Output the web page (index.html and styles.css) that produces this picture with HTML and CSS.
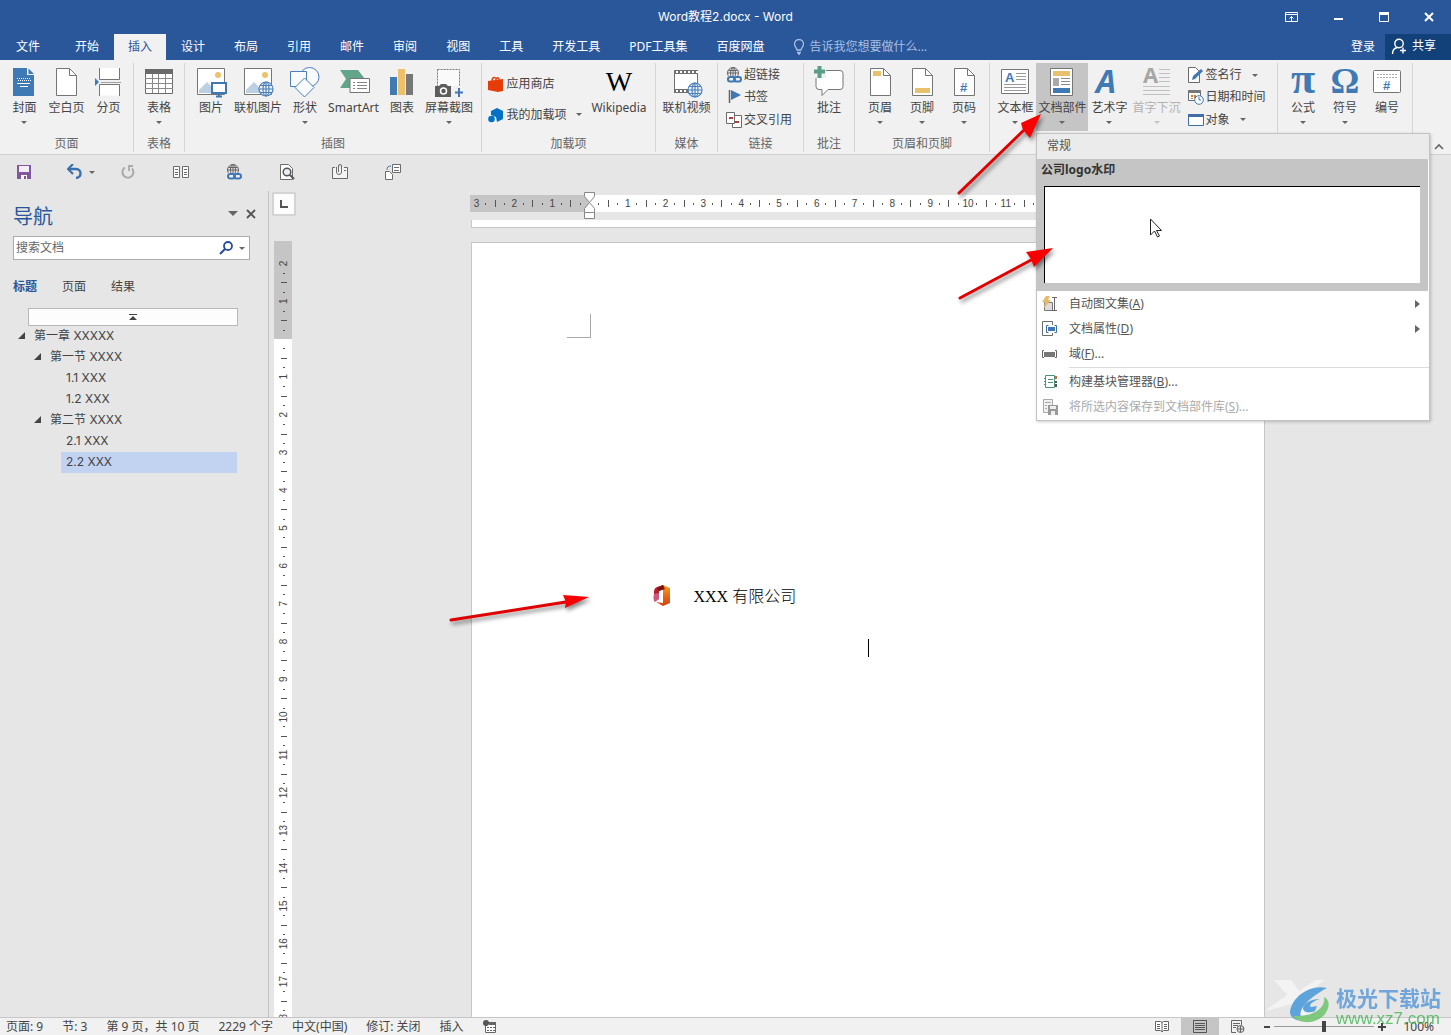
FILE: index.html
```html
<!DOCTYPE html>
<html lang="zh-CN">
<head>
<meta charset="utf-8">
<title>Word教程2.docx - Word</title>
<link rel="stylesheet" href="styles.css">
</head>
<body>
<svg class="defs" aria-hidden="true">
  <symbol id="globe" viewBox="0 0 16 16"><circle cx="8" cy="8" r="7" fill="#f1f1f1"/><g fill="none" stroke="currentColor" stroke-width="1.2"><circle cx="8" cy="8" r="7"/><ellipse cx="8" cy="8" rx="3" ry="7"/><path d="M1 8h14M2 4.500h12M2 11.500h12M8 1v14"/></g></symbol>
  <symbol id="page" viewBox="0 0 32 32"><path d="M6.500 2.500h13l7 7v20h-20z" fill="#fff" stroke="#757575"/><path d="M19.500 2.500v7h7" fill="none" stroke="#757575"/></symbol>
  <symbol id="photo" viewBox="0 0 32 32"><path d="M2.500 2.500h27v26h-27z" fill="#fff" stroke="#757575"/><circle cx="23" cy="9" r="3" fill="#ecc26c"/><path d="M4 27v-3l8-8 9 9v2z" fill="#bcd0e4"/></symbol>
  <symbol id="weblink" viewBox="0 0 16 16"><g fill="none" stroke="#666"><circle cx="7" cy="6" r="5.500"/><ellipse cx="7" cy="6" rx="2.500" ry="5.500"/><path d="M1.500 6h11M7 .5v9M2.500 3.500h9"/></g><rect x="0" y="9" width="16" height="7" fill="#eee"/><g fill="none" stroke="#3f78b5" stroke-width="2"><rect x="2" y="10" width="7" height="4.500" rx="2.200"/><rect x="8" y="10" width="7" height="4.500" rx="2.200"/></g></symbol>
</svg>

<div class="app">
  <header class="top">
    <div class="titlebar">
      <h1 class="title">Word教程2.docx - Word</h1>
      <div class="window-buttons">
        <button type="button" aria-label="功能区显示选项"><svg width="14" height="12" viewBox="0 0 14 12"><path d="M.5 1.500h12v9H.5zM.5 3.500h12M6.500 10V5.500M4.500 7.500l2-2 2 2" fill="none" stroke="#fff"/></svg></button>
        <button type="button" aria-label="最小化"><svg width="14" height="12"><path d="M3 7h9v2H3z" fill="#fff"/></svg></button>
        <button type="button" aria-label="最大化"><svg width="14" height="12"><path d="M2.500 1.500h9v9h-9zM2 3h10" fill="none" stroke="#fff"/><path d="M2 1h10v3H2z" fill="#fff"/></svg></button>
        <button type="button" aria-label="关闭"><svg width="14" height="12"><path d="M3 2l8 8M11 2l-8 8" stroke="#fff" stroke-width="2"/></svg></button>
      </div>
    </div>
    <nav class="tabs">
      <a href="#" class="tab file">文件</a>
      <a href="#" class="tab">开始</a>
      <a href="#" class="tab active">插入</a>
      <a href="#" class="tab">设计</a>
      <a href="#" class="tab">布局</a>
      <a href="#" class="tab">引用</a>
      <a href="#" class="tab">邮件</a>
      <a href="#" class="tab">审阅</a>
      <a href="#" class="tab">视图</a>
      <a href="#" class="tab">工具</a>
      <a href="#" class="tab">开发工具</a>
      <a href="#" class="tab">PDF工具集</a>
      <a href="#" class="tab">百度网盘</a>
      <label class="tell"><svg width="12" height="16" viewBox="0 0 12 16"><path d="M4 11c0-2-2.500-3-2.500-6a4.500 4.500 0 0 1 9 0c0 3-2.500 4-2.500 6zM4 13.500h4M5 15h2" fill="none" stroke="#a9bfe0" stroke-width="1.300"/></svg><input type="text" placeholder="告诉我您想要做什么..."></label>
      <button type="button" class="login">登录</button>
      <button type="button" class="share"><svg width="16" height="16" viewBox="0 0 16 16"><circle cx="8" cy="5.500" r="4.200" fill="none" stroke="#fff" stroke-width="1.400"/><path d="M1.500 16c0-3.500 2-6 5-6.500M12 9.500v6M9 12.500h6" fill="none" stroke="#fff" stroke-width="1.400"/></svg>共享</button>
    </nav>
  </header>

  <section class="ribbon" aria-label="插入">
    <div class="group g-pages"><div class="items">
      <button type="button" class="big"><svg class="ico" viewBox="0 0 32 32"><path d="M5 2h14v7h7v21H5z" fill="#3f7ab5"/><path d="M20.500 2.500v5.500h5.500z" fill="#3f7ab5"/><path d="M9 12.500h13M10 14.500h13" stroke="#fff" stroke-dasharray="1 1"/><path d="M9 17.500h13M12 20.500h8" stroke="#fff"/></svg><span>封面</span><i class="caret"></i></button>
      <button type="button" class="big"><svg class="ico"><use href="#page"/></svg><span>空白页</span></button>
      <button type="button" class="big"><svg class="ico" viewBox="0 0 32 32"><path d="M6.500 2v11.500h20V2M6.500 29.500v-11h20v11M6.500 30v-1M26.500 30v-1" fill="#fff" stroke="#757575"/><path d="M8 16.500h20" stroke="#a0a0a0"/><path d="M2 12l4 4-4 4z" fill="#3f7ab5"/></svg><span>分页</span></button>
    </div><h2>页面</h2></div>

    <div class="group g-table"><div class="items">
      <button type="button" class="big"><svg class="ico" viewBox="0 0 32 32"><path d="M2.500 3.500h27v24h-27z" fill="#fff" stroke="#6a6a6a"/><path d="M2 3h28v5H2z" fill="#6a6a6a"/><path d="M2 12.500h28M2 17.500h28M2 22.500h28M9.500 8v19M15.500 8v19M22.500 8v19" stroke="#8a8a8a"/></svg><span>表格</span><i class="caret"></i></button>
    </div><h2>表格</h2></div>

    <div class="group g-illus"><div class="items">
      <button type="button" class="big"><svg class="ico" viewBox="0 0 32 32"><use href="#photo"/><path d="M16 16h16v12H16z" fill="#f1f1f1"/><path d="M17 17h14v10H17z" fill="#fff" stroke="#3f78b5" stroke-width="2"/><path d="M21 30.500h6M24 28v2" stroke="#3f78b5" stroke-width="2"/></svg><span>图片</span></button>
      <button type="button" class="big"><svg class="ico blue" viewBox="0 0 32 32"><use href="#photo"/><use href="#globe" x="16" y="15" width="16" height="16"/></svg><span>联机图片</span></button>
      <button type="button" class="big"><svg class="ico" viewBox="0 0 32 32" stroke="#4a7fbb" fill="#f8fafc"><circle cx="20.500" cy="11" r="9.500"/><path d="M1.500 5.500h16v15h-16z"/><path d="M15.500 12l9.500 9.500-9.500 9.500L6 21.500z"/></svg><span>形状</span><i class="caret"></i></button>
      <button type="button" class="big"><svg class="ico" viewBox="0 0 32 32"><path d="M2 4h18l7 9-7 9H2l6-9z" fill="#62a58b"/><path d="M12 12.500h19.500v14H12z" fill="#fff" stroke="#757575"/><path d="M15 16.500h2M15 19.500h2M15 22.500h2M19 16.500h10M19 19.500h10M19 22.500h10" stroke="#858585"/></svg><span>SmartArt</span></button>
      <button type="button" class="big"><svg class="ico" viewBox="0 0 32 32"><path d="M4 11h7v18H4z" fill="#3f7ab5"/><path d="M12 3h7v26h-7z" fill="#efc06c"/><path d="M20 8h7v21h-7z" fill="#777"/></svg><span>图表</span></button>
      <button type="button" class="big"><svg class="ico" viewBox="0 0 32 32"><path d="M4.500 3.500h22v24h-22z" fill="#fafafa" stroke="#777" stroke-dasharray="2 1"/><path d="M2 20h4l2-2h5l2 2h3v11H2z" fill="#5d5d5d"/><circle cx="10.500" cy="25" r="3" fill="#5d5d5d" stroke="#fff" stroke-width="1.500"/><path d="M18 20h10v11H18z" fill="#f1f1f1"/><path d="M26 22v9M22 26.500h8" stroke="#3f78b5" stroke-width="2"/></svg><span>屏幕截图</span><i class="caret"></i></button>
    </div><h2>插图</h2></div>

    <div class="group g-addins"><div class="items">
      <div class="stack roomy">
        <button type="button" class="small"><svg class="mini" viewBox="0 0 16 16"><path d="M0 5l15-2v12l-5 1-10-2z" fill="#e63c0a"/><path d="M4 5c0-4 4-5 4-1M8 4c0-3 3-3 3 0" fill="none" stroke="#e63c0a" stroke-width="1.300"/></svg>应用商店</button>
        <button type="button" class="small"><svg class="mini" viewBox="0 0 16 16"><path d="M3 4l6-3 6 3v8l-6 3-1-5-5-2z" fill="#0072c6"/><circle cx="3.500" cy="12" r="3.300" fill="#0072c6"/></svg>我的加载项<i class="caret"></i></button>
      </div>
      <button type="button" class="big"><span class="ico wiki">W</span><span>Wikipedia</span></button>
    </div><h2>加载项</h2></div>

    <div class="group g-media"><div class="items">
      <button type="button" class="big"><svg class="ico blue" viewBox="0 0 32 32"><path d="M4 4h24v23H4z" fill="#707070"/><path d="M5 8h22v15H5z" fill="#fff"/><path d="M6 6h22M6 25h12" stroke="#fff" stroke-width="2" stroke-dasharray="2 2"/><use href="#globe" x="17" y="16" width="16" height="16"/></svg><span>联机视频</span></button>
    </div><h2>媒体</h2></div>

    <div class="group g-links"><div class="items">
      <div class="stack">
        <button type="button" class="small"><svg class="mini"><use href="#weblink"/></svg>超链接</button>
        <button type="button" class="small"><svg class="mini" viewBox="0 0 16 16"><path d="M3.500 1v13" stroke="#606060" stroke-width="1.500"/><path d="M5 1l10 5-10 5z" fill="#3f78b5"/></svg>书签</button>
        <button type="button" class="small"><svg class="mini" viewBox="0 0 16 16" fill="#fff" stroke="#6b6b6b"><path d="M8.500 3.500h7v12h-9v-4"/><path d="M.5.500h8v11h-8z"/><path d="M3 6h4M9 10h4" stroke="#b2403a" stroke-width="2"/></svg>交叉引用</button>
      </div>
    </div><h2>链接</h2></div>

    <div class="group g-comment"><div class="items">
      <button type="button" class="big"><svg class="ico" viewBox="0 0 32 32"><path d="M6 4.500h21q3 0 3 3v13q0 3-3 3H15l-6 6v-6H6q-3 0-3-3v-13q0-3 3-3z" fill="#fff" stroke="#777"/><path d="M1 1h12v11H1z" fill="#f1f1f1"/><path d="M6.500 0v12M1 5.500h11" stroke="#5a9f85" stroke-width="4"/></svg><span>批注</span></button>
    </div><h2>批注</h2></div>

    <div class="group g-header wide"><div class="items">
      <button type="button" class="big"><svg class="ico" viewBox="0 0 32 32"><use href="#page"/><path d="M9 5h8v5H9z" fill="#e8c06e"/></svg><span>页眉</span><i class="caret"></i></button>
      <button type="button" class="big"><svg class="ico" viewBox="0 0 32 32"><use href="#page"/><path d="M9 22h15v5H9z" fill="#e8c06e"/></svg><span>页脚</span><i class="caret"></i></button>
      <button type="button" class="big"><svg class="ico" viewBox="0 0 32 32"><use href="#page"/><text x="12" y="26" class="hash">#</text></svg><span>页码</span><i class="caret"></i></button>
    </div><h2>页眉和页脚</h2></div>

    <div class="group g-text"><div class="items">
      <button type="button" class="big"><svg class="ico" viewBox="0 0 32 32"><path d="M2.500 3.500h27v24h-27z" fill="#fff" stroke="#757575"/><text x="6" y="16" class="hash">A</text><path d="M17 7.500h10M17 10.500h10M17 13.500h10M5 18.500h22M5 21.500h22M5 24.500h22" stroke="#9a9a9a"/></svg><span>文本框</span><i class="caret"></i></button>
      <button type="button" class="big pressed" aria-expanded="true"><svg class="ico" viewBox="0 0 32 32"><path d="M4.500 2.500h22v27h-22z" fill="#fff" stroke="#757575"/><path d="M7 5h17v5H7z" fill="#e8c06e"/><path d="M7 12h6v8H7z" fill="#aaa"/><path d="M15 12.500h9M15 15.500h9M15 18.500h9" stroke="#8a8a8a"/><path d="M7 22h17v5H7z" fill="#3f7ab5"/></svg><span>文档部件</span><i class="caret"></i></button>
      <button type="button" class="big"><svg class="ico" viewBox="0 0 32 32"><text x="3" y="27" class="art">A</text></svg><span>艺术字</span><i class="caret"></i></button>
      <button type="button" class="big off" disabled><svg class="ico" viewBox="0 0 32 32"><text x="2" y="17" class="drop">A</text><path d="M18 3.500h11M18 7.500h11M18 11.500h11M18 15.500h11M2 20.500h27M2 24.500h27M2 28.500h27" stroke="#c0c0c0"/></svg><span>首字下沉</span><i class="caret"></i></button>
      <div class="stack">
        <button type="button" class="small"><svg class="mini" viewBox="0 0 16 16"><path d="M.5.500h7l4 4v11H.5z" fill="#fff" stroke="#6b6b6b"/><path d="M4 13l1-4 8-7 2 2-8 8z" fill="#3f78b5"/></svg>签名行<i class="caret"></i></button>
        <button type="button" class="small"><svg class="mini" viewBox="0 0 16 16"><path d="M.5 1.500h12v10H.5z" fill="#fff" stroke="#6b6b6b"/><path d="M0 1h13v3H0z" fill="#777"/><path d="M3 6h2v2H3zM6 6h2v3H6zM3 9h2v1H3z" fill="#d07b3d"/><circle cx="11" cy="11" r="4.300" fill="#fff" stroke="#3f78b5"/><path d="M11 8v3h2" fill="none" stroke="#3f78b5"/></svg>日期和时间</button>
        <button type="button" class="small"><svg class="mini" viewBox="0 0 16 16"><path d="M.5 2.500h15v11H.5z" fill="#fff" stroke="#3f6fa5"/><path d="M0 2h16v3H0z" fill="#3f6fa5"/></svg>对象<i class="caret"></i></button>
      </div>
    </div></div>

    <div class="group g-symbol wide"><div class="items">
      <button type="button" class="big"><svg class="ico" viewBox="0 0 32 32"><text x="16" y="27" class="sym pi">π</text></svg><span>公式</span><i class="caret"></i></button>
      <button type="button" class="big"><svg class="ico" viewBox="0 0 32 32"><text x="16" y="27" class="sym">Ω</text></svg><span>符号</span><i class="caret"></i></button>
      <button type="button" class="big"><svg class="ico" viewBox="0 0 32 32"><rect x="2.500" y="4.500" width="27" height="22" rx="1" fill="#fff" stroke="#757575"/><path d="M6 8.500h20M6 11.500h20" stroke="#aaa" stroke-dasharray="2 1"/><text x="12" y="24" class="hash">#</text></svg><span>编号</span></button>
    </div></div>
    <button type="button" class="collapse" aria-label="折叠功能区"><svg width="10" height="7"><path d="M1 6l4-4 4 4" fill="none" stroke="#666" stroke-width="1.600"/></svg></button>
  </section>

  <div class="quick">
    <button type="button" aria-label="保存"><svg class="mini" viewBox="0 0 16 16"><path d="M1 1h14v14H1z" fill="#8256a0"/><path d="M3 2h10v6H3z" fill="#f3eef6"/><path d="M5 11h6v4H5z" fill="#fff"/><path d="M8 12h2v3H8z" fill="#8256a0"/></svg></button>
    <button type="button" aria-label="撤消"><svg class="mini" viewBox="0 0 16 16"><path d="M2 5h7c6 0 6 8 0 9" fill="none" stroke="#3a6fb0" stroke-width="2.400"/><path d="M6 0L1 5l5 5" fill="none" stroke="#3a6fb0" stroke-width="2.200"/></svg><i class="caret"></i></button>
    <button type="button" aria-label="重复"><svg class="mini" viewBox="0 0 16 16"><path d="M5 3.500a5.500 5.500 0 1 0 7 1" fill="none" stroke="#aaa" stroke-width="2"/><path d="M13 2H9v5" fill="none" stroke="#aaa" stroke-width="1.800"/></svg></button>
    <button type="button" aria-label="双页"><svg width="18" height="14" fill="#fff" stroke="#6b6b6b"><path d="M1.500 1.500h6v11h-6zM10.500 1.500h6v11h-6z"/><path d="M3 4.500h3M3 7.500h3M3 9.500h3M12 4.500h3M12 7.500h3M12 9.500h3"/></svg></button>
    <button type="button" aria-label="超链接"><svg class="mini"><use href="#weblink"/></svg></button>
    <button type="button" aria-label="打印预览"><svg class="mini" viewBox="0 0 16 16"><path d="M1.500.500h8l4 4v11h-12z" fill="#fff" stroke="#6b6b6b"/><circle cx="8" cy="8" r="3.800" fill="#e8eef2" stroke="#555" stroke-width="1.500"/><path d="M11 11l4 4" stroke="#555" stroke-width="2"/></svg></button>
    <button type="button" aria-label="附件"><svg class="mini" viewBox="0 0 16 16" fill="none" stroke="#6b6b6b"><path d="M3 3.500H.5v11h15v-11H12" fill="#f4f4f4"/><path d="M4.500 3v5a2.500 2.500 0 0 0 5 0V2a1.500 1.500 0 0 0-3 0v6"/><path d="M12 6.500h2"/></svg></button>
    <button type="button" aria-label="发送"><svg class="mini" viewBox="0 0 16 16" fill="#fff" stroke="#6b6b6b"><path d="M.5 7.500h4l3 3v5h-7zM7.500.500h8v8h-8z"/><path d="M9 3.500h5M9 6.500h5"/><path d="M2 6c0-3 1-4 4-4" stroke="#3f78b5" fill="none"/></svg></button>
  </div>

  <main class="work">
    <aside class="navpane">
      <div class="nav-head"><h2>导航</h2><button type="button" aria-label="任务窗格选项"><svg width="10" height="6"><path d="M0 0h10L5 5z" fill="#666"/></svg></button><button type="button" aria-label="关闭窗格"><svg width="10" height="10"><path d="M1 1l8 8M9 1l-8 8" stroke="#555" stroke-width="1.800"/></svg></button></div>
      <label class="search"><input type="text" placeholder="搜索文档" aria-label="搜索文档"><svg width="14" height="14" viewBox="0 0 14 14"><circle cx="9" cy="5" r="4" fill="none" stroke="#2c4d9b" stroke-width="1.800"/><path d="M6 8l-5 5" stroke="#2c4d9b" stroke-width="2.200"/></svg><i class="caret"></i></label>
      <div class="nav-tabs"><a href="#" class="on">标题</a><a href="#">页面</a><a href="#">结果</a></div>
      <button type="button" class="jump" aria-label="跳到开头"><svg width="8" height="6"><path d="M0 .5h8" stroke="#444"/><path d="M0 6h8L4 2z" fill="#444"/></svg></button>
      <ul class="tree">
        <li class="l1"><i></i>第一章 XXXXX</li>
        <li class="l2"><i></i>第一节 XXXX</li>
        <li class="l3">1.1 XXX</li>
        <li class="l3">1.2 XXX</li>
        <li class="l2"><i></i>第二节 XXXX</li>
        <li class="l3">2.1 XXX</li>
        <li class="l3 sel">2.2 XXX</li>
      </ul>
    </aside>
    <div class="side">
      <button type="button" class="corner" aria-label="制表符"><svg width="8" height="8"><path d="M1 0v7h7" fill="none" stroke="#555" stroke-width="2"/></svg></button>
      <svg class="vruler" id="vruler"></svg>
    </div>
    <div class="canvas">
      <svg class="hruler" id="hruler"></svg>
      <div class="prev-page"></div>
      <article class="paper">
        <div class="crop"></div>
        <div class="mark"><svg width="20" height="24" viewBox="0 0 20 24"><defs><linearGradient id="og" x1="0" y1="0" x2="0" y2="1"><stop offset="0" stop-color="#f5a01c"/><stop offset="1" stop-color="#d93a12"/></linearGradient></defs><path d="M11 0l7 3v15l-7 3-7-4 7 1V4z" fill="url(#og)"/><path d="M11 0l1 4-5 2v8l-4 2c-2-2-1-5-1-8 0-4 1-5 3-6z" fill="#b3202a"/><path d="M7 8v6l-4 3c-2-1-1-5-1-8z" fill="#cc5a80"/><path d="M11 0l2 4-6 2-2-3z" fill="#7d1210"/></svg><p>XXX 有限公司</p></div>
        <div class="insertion"></div>
      </article>
    </div>
  </main>

  <footer class="status">
    <span>页面: 9</span><span>节: 3</span><span>第 9 页，共 10 页</span><span>2229 个字</span><span>中文(中国)</span><span>修订: 关闭</span><span>插入</span>
    <svg width="14" height="13" viewBox="0 0 14 13"><path d="M2.500 3.500h10v9h-10z" fill="#fff" stroke="#666"/><path d="M6 2h7v3H6z" fill="#666"/><circle cx="3" cy="3" r="3" fill="#555"/><path d="M4 7.500h8M4 10.500h8" stroke="#666" stroke-dasharray="2 1"/></svg>
    <div class="views">
      <button type="button" aria-label="阅读视图"><svg width="14" height="13" fill="#fff" stroke="#666"><path d="M.5 1.500h5l1.500 1 1.500-1h5v9h-5L7 12l-1.500-1.500h-5zM7 2v10M2 4.500h3M2 6.500h3M2 8.500h3M9 4.500h3M9 6.500h3M9 8.500h3"/></svg></button>
      <button type="button" class="current" aria-label="页面视图"><svg width="14" height="13" stroke="#555"><path d="M.5.500h13v12H.5zM2 3.500h10M2 5.500h10M2 7.500h10M2 9.500h10" fill="none"/></svg></button>
      <button type="button" aria-label="Web 版式视图"><svg width="14" height="13" viewBox="0 0 14 13" stroke="#666"><path d="M5 12.500H.5V.5h10V5M2 3.500h7M2 5.500h5M2 7.500h3" fill="none"/><circle cx="9.500" cy="9" r="3.500" fill="#ddd"/><path d="M6 9h7M9.500 6v6"/></svg></button>
    </div>
    <button type="button" class="step minus" aria-label="缩小"><svg width="7" height="8"><path d="M0 4h6" stroke="#444" stroke-width="2"/></svg></button>
    <input type="range" class="zoom" min="10" max="190" value="100" aria-label="显示比例">
    <button type="button" class="step plus" aria-label="放大"><svg width="8" height="8"><path d="M0 4h8M4 0v8" stroke="#444" stroke-width="2"/></svg></button>
    <span class="percent">100%</span>
  </footer>
</div>

<section class="gallery">
  <h3>常规</h3>
  <button type="button" class="block"><strong>公司logo水印</strong><span class="preview"></span></button>
  <button type="button" class="row"><svg class="mini" viewBox="0 0 16 16"><path d="M2.500 6.500h8v8h-8z" fill="#ddd" stroke="#777"/><path d="M4 0h4L6 4h3l-7 8 1-6H0z" fill="#e8b96a"/><path d="M10 1.500h2.500v13H10M15 1.500h-2.500v13H15" fill="none" stroke="#666"/></svg><span>自动图文集(<u>A</u>)</span><i class="more"></i></button>
  <button type="button" class="row"><svg class="mini" viewBox="0 0 16 16"><path d="M10.500 4V.500H.5v14h10V12" fill="none" stroke="#6b6b6b"/><path d="M6.500 4.500h-2v7h2M12.500 4.500h2v7h-2" fill="none" stroke="#3f6fa5"/><path d="M6 6h7v4H6z" fill="#3f78b5"/></svg><span>文档属性(<u>D</u>)</span><i class="more"></i></button>
  <button type="button" class="row"><svg class="mini" viewBox="0 0 16 16"><path d="M2 4.500H.5v7H2M13 4.500h1.500v7H13" fill="none" stroke="#666"/><path d="M2 6h11v5H2z" fill="#777"/></svg><span>域(<u>F</u>)...</span></button>
  <hr>
  <button type="button" class="row"><svg class="mini" viewBox="0 0 16 16"><path d="M3.500 1.500h9v12h-9z" fill="#fff" stroke="#4c8f7a"/><path d="M6 5.500h5M6 8.500h5M2 4.500h2M2 7.500h2M2 10.500h2" stroke="#4c8f7a"/><path d="M13 2h2v3h-2z" fill="#c9683a"/><path d="M13 7h2v2h-2zM13 10h2v3h-2z" fill="#555"/></svg><span>构建基块管理器(<u>B</u>)...</span></button>
  <button type="button" class="row" disabled><svg class="mini" viewBox="0 0 16 16"><path d="M1.500.500h9v13h-9z" fill="#f1f1f1" stroke="#aaa"/><path d="M3 3.500h6M3 6.500h2M3 9.500h2" stroke="#aaa"/><path d="M6 6h10v10H6z" fill="#999"/><path d="M8 7h6v3H8zM9 12h4v4H9z" fill="#eee"/></svg><span>将所选内容保存到文档部件库(<u>S</u>)...</span></button>
  <svg class="pointer" width="14" height="21" viewBox="0 0 14 21"><path d="M1.500 1v16l4-4 3 6 2-1-3-5.500h5z" fill="#fff" stroke="#222"/></svg>
</section>

<svg class="arrows" width="1100" height="640" aria-hidden="true">
  <g stroke="#e00000" stroke-width="3" stroke-linecap="round" fill="#f80000">
    <path d="M959 193l64-62"/><path d="M960 298l73-39"/><path d="M451 620l115-18"/>
  </g>
  <g fill="#f80000"><path d="M1041 114l-20 9 2 7 7 8z"/><path d="M1053 248l-27 4 5 7 3 8z"/><path d="M589 597l-26-2 3 7-1 6z"/></g>
</svg>

<div class="brand">
  <svg width="70" height="50" viewBox="0 0 70 50"><path d="M8 1h17l8 11L50 1h8L37 20l12 16H34l-9-11L4 31H0l21-15z" fill="#fff" opacity=".6"/><path d="M61 9C44 5 25 18 24 34c1 5 7 9 14 7-8-5-3-18 23-32z" fill="#4597da"/><path d="M27 37c7 9 24 8 32-2 6-8 4-15-1-17 2 10-9 20-31 19z" fill="#6cc36a"/><path d="M54 20c-9 0-16 4-17 9 0 4 5 6 12 3l2-5-6 1c-3-2 2-6 9-8z" fill="#4597da"/></svg>
  <div><b>极光下载站</b><em>www.xz7.com</em></div>
</div>
<script src="rulers.js"></script>
</body>
</html>
```
FILE: styles.css
```css
* { box-sizing: border-box; }
body { margin: 0; background: #e6e6e6; color: #444; font: 12px/18px "Noto Sans", "Noto Sans CJK SC", sans-serif; }
button, input { font: inherit; color: inherit; background: none; border: 0; padding: 0; margin: 0; }
button { display: flex; align-items: center; white-space: nowrap; }
h1, h2, h3, p, ul { margin: 0; padding: 0; font-weight: 400; font-size: 12px; list-style: none; }
a { color: inherit; text-decoration: none; }
svg { display: block; flex: none; }
.defs { position: absolute; width: 0; height: 0; }
.app { height: 100vh; display: flex; flex-direction: column; overflow: hidden; }
.caret { border: 3px solid transparent; border-top-color: #666; border-bottom: 0; }
.mini { width: 16px; height: 16px; }
.blue { color: #4a80bd; }

/* title bar and tabs */
.top { background: #2a579a; color: #fff; }
.titlebar { height: 34px; display: grid; grid-template-columns: 1fr auto 1fr; align-items: center; }
.title { grid-column: 2; font-family: Inter, "Noto Sans CJK SC", sans-serif; }
.window-buttons { display: flex; justify-content: flex-end; }
.window-buttons button { width: 46px; justify-content: center; }
.window-buttons button:last-child { width: 44px; }
.tabs { display: flex; height: 26px; gap: 1px; padding-left: 2px; white-space: nowrap; }
.tab { padding: 4px 14px 3px; }
.file { margin-right: 6px; }
.active { background: #f1f1f1; color: #2a579a; }
.tell { display: flex; align-items: center; gap: 4px; padding-left: 14px; flex: 1; color: #a9bfe0; }
.tell input { width: 160px; }
.tell input::placeholder { color: #a9bfe0; opacity: 1; }
.login { padding: 0 9px 1px; }
.share { background: #124078; padding: 0 15px 2px 6px; gap: 5px; }

/* ribbon */
.ribbon { display: flex; height: 95px; flex: none; background: #f1f1f1; border-bottom: 1px solid #d2d2d2; padding: 3px 0 2px; position: relative; }
.group { flex: none; display: flex; flex-direction: column; align-items: center; border-right: 1px solid #d5d5d5; --gap: 7px; }
.group h2 { color: #666; margin-top: 4px; }
.items { display: flex; gap: var(--gap); height: 68px; }
.g-pages { width: 134px; --gap: 8px; }
.g-table, .g-comment { width: 51px; }
.g-illus { width: 297px; }
.g-illus .items { padding-left: 6px; }
.g-addins { width: 174px; }
.g-media { width: 62px; }
.g-links { width: 86px; }
.g-links .items { padding-right: 3px; }
.g-header { width: 135px; }
.g-text { width: 288px; --gap: 1px; }
.g-text .items { padding-right: 6px; }
.g-symbol { width: 135px; }
.wide { --gap: 14px; }
.big { flex-direction: column; padding: 3px 2px 0; height: 68px; }
.big .ico { width: 32px; height: 32px; margin: 0 -4px 1px; overflow: visible; }
.big .caret { margin-top: 4px; }
.pressed { background: #c5c5c5; }
.off { color: #b1b1b1; }
.off .caret { border-top-color: #c5c5c5; }
.wiki { font: 28px/32px "Liberation Serif", serif; color: #000; text-align: center; }
.stack { display: flex; flex-direction: column; padding-top: 1px; }
.small { height: 23px; gap: 2px; }
.small .caret { margin-left: 8px; }
.roomy { padding-top: 5px; }
.roomy .small { height: 31px; }
.g-text .stack { padding-left: 4px; }
.hash { font: bold 13px "Liberation Sans", sans-serif; fill: #3f78b5; }
.art { font: italic bold 32px "Open Sans", sans-serif; fill: #3f7ab5; }
.drop { font: bold 22px "Open Sans", sans-serif; fill: #a6a6a6; }
.sym { font: bold 36px "Liberation Serif", serif; fill: #3f7ab5; text-anchor: middle; }
.pi { font-size: 44px; }
.collapse { position: absolute; right: 7px; bottom: 4px; }

/* quick access */
.quick { height: 36px; flex: none; display: flex; }
.quick button { width: 53px; height: 34px; justify-content: center; position: relative; }
.quick button:first-child { width: 48px; }
.quick .caret { position: absolute; left: 41px; top: 16px; }

/* navigation pane */
.work { flex: 1; min-height: 0; display: flex; }
.navpane { width: 269px; flex: none; border-right: 1px solid #c2c2c2; padding: 11px 18px 0 13px; }
.nav-head { display: flex; gap: 8px; height: 30px; margin-right: -6px; }
.nav-head h2 { flex: 1; font-size: 20px; line-height: 30px; color: #2a579a; }
.nav-head button { height: 24px; }
.search { display: flex; align-items: center; gap: 6px; height: 24px; margin: 4px 0 18px; padding: 0 4px 0 2px; background: #fff; border: 1px solid #ababab; }
.search input { flex: 1; min-width: 0; }
.search input::placeholder { color: #666; opacity: 1; }
.nav-tabs { display: flex; gap: 25px; margin-bottom: 12px; }
.nav-tabs .on { color: #2a579a; font-weight: 700; }
.jump { width: 210px; height: 18px; margin-left: 15px; justify-content: center; background: #fdfdfd; border: 1px solid #b8b8b8; }
.tree { font-family: Inter, "Noto Sans CJK SC", sans-serif; }
.tree li { height: 21px; line-height: 20px; position: relative; }
.tree .l1 { margin-left: 5px; padding-left: 16px; }
.tree .l2 { margin-left: 21px; padding-left: 16px; }
.tree .l3 { margin: 0 13px 0 48px; padding-left: 5px; }
.tree i { position: absolute; left: 0; top: 6px; border-left: 7px solid transparent; border-bottom: 7px solid #444; }
.tree .sel { background: #c2d3f2; }

/* rulers and pages */
.side { width: 26px; flex: none; display: flex; flex-direction: column; padding-top: 1px; }
.corner { width: 24px; height: 24px; margin-left: 3px; flex: none; justify-content: center; background: #fdfdfd; border: 2px solid #d4d4d4; }
.vruler { width: 18px; flex: 1; min-height: 0; margin: 25px 0 0 5px; }
.canvas { flex: 1; min-width: 0; display: flex; flex-direction: column; align-items: center; padding: 1px 11px 0 0; }
.hruler { width: 796px; height: 28px; }
.prev-page { width: 794px; height: 8px; background: #fff; border: 1px solid #c6c6c6; border-top: 0; }
.paper { width: 794px; flex: 1; margin-top: 14px; background: #fff; border: 1px solid #c6c6c6; border-bottom: 0; position: relative; }
.crop { width: 24px; height: 24px; margin: 71px 0 0 95px; border: 1px solid #aaa; border-width: 0 1px 1px 0; }
.mark { display: flex; align-items: center; gap: 22px; margin: 245px 0 0 180px; }
.mark p { font: 300 16px/28px "Liberation Serif", "Noto Sans CJK SC", serif; color: #000; }
.insertion { width: 1px; height: 18px; margin: 28px 0 0 396px; background: #000; }
.tick { stroke: #555; }
.num { font: 10px "Liberation Sans", sans-serif; fill: #444; text-anchor: middle; }

/* status bar */
.status { height: 18px; flex: none; display: flex; align-items: center; gap: 19px; padding: 0 17px 0 6px; background: #f1f1f1; border-top: 1px solid #c6c6c6; white-space: nowrap; }
.views { display: flex; margin-left: auto; }
.views button { width: 38px; height: 17px; justify-content: center; }
.views .current { background: #c5c5c5; }
.minus { margin: 0 -16px 0 -12px; }
.plus { margin: 0 -2px 0 -15px; }
.zoom { appearance: none; width: 100px; height: 12px; background: linear-gradient(#999, #999) center / 100% 1px no-repeat; }
.zoom::-webkit-slider-thumb { appearance: none; width: 4px; height: 11px; background: #444; }

/* gallery menu */
.gallery { position: absolute; right: 21px; top: 133px; width: 394px; background: #fff; border: 1px solid #c3c3c3; box-shadow: 1px 1px 3px #0003; padding-bottom: 1px; }
.gallery h3 { height: 25px; line-height: 24px; padding-left: 10px; background: #ebebeb; color: #555; font-size: 12px; }
.block { width: 100%; height: 132px; flex-direction: column; align-items: stretch; text-align: left; background: #c5c5c5; padding: 2px 8px 8px 4px; border-right: 1px solid #fff; }
.block strong { color: #333; }
.preview { flex: 1; margin: 7px 0 0 3px; background: #fff; border: 1px solid #000; border-width: 1px 0 0 1px; }
.row { width: 100%; height: 25px; gap: 11px; padding: 0 9px 0 5px; text-align: left; color: #555; }
.row span { flex: 1; }
.row:disabled { color: #aaa; }
.more { border: 4px solid transparent; border-left: 5px solid #666; border-right: 0; }
.gallery hr { border: 0; border-top: 1px solid #dcdcdc; margin: 1px 0 1px 32px; }
.pointer { position: absolute; left: 112px; top: 84px; }

/* annotations */
.arrows { position: absolute; left: 0; top: 0; pointer-events: none; filter: drop-shadow(2px 3px 2px #0007); }
.brand { position: fixed; right: 10px; bottom: 6px; display: flex; align-items: center; pointer-events: none; opacity: .85; }
.brand div { display: flex; flex-direction: column; padding-top: 5px; }
.brand b { font-size: 21px; line-height: 24px; color: #5b9ad8; }
.brand em { font: 17px/18px "Liberation Sans", sans-serif; color: #4cb95c; }
```
FILE: rulers.js
```js
// Rulers are marked in centimetres at 96 dpi.
const CM = 37.8;

function marks(from, to, origin, put) {
  for (let q = from * 4; q <= to * 4; q++) {
    const pos = origin + q * CM / 4;
    if (q === 0) continue;
    if (q % 4 === 0) put('num', pos, Math.abs(q / 4));
    else put(q % 2 === 0 ? 'half' : 'dot', pos);
  }
}

let h = '<path d="M0 3h119v17H0z" fill="#c5c5c5"/><path d="M119 3h579v17H119z" fill="#fff"/><path d="M698 3h98v17h-98z" fill="#c5c5c5"/>';
marks(-3, 17, 119, (kind, p, n) => {
  if (kind === 'num') h += `<text class="num" x="${p + 1}" y="15">${n}</text>`;
  else {
    const x = Math.round(p) + 0.5;
    h += kind === 'half' ? `<path class="tick" d="M${x} 8v7"/>` : `<path class="tick" d="M${x} 11v2"/>`;
  }
});
h += '<path d="M114.500.500h10v4l-5 6-5-6zM114.500 20.500v-4l5-6 5 6v4zM114.500 20.500h10v6h-10z" fill="#fff" stroke="#888"/>';
document.getElementById('hruler').innerHTML = h;

const side = document.getElementById('vruler');
const last = Math.ceil((side.getBoundingClientRect().height - 98) / CM);
let v = '<path d="M0 0h18v98H0z" fill="#c5c5c5"/><path d="M0 98h18v2000H0z" fill="#fff"/>';
marks(-2, last, 98, (kind, p, n) => {
  if (kind === 'num') v += `<text class="num" transform="translate(13 ${p}) rotate(-90)">${n}</text>`;
  else {
    const y = Math.round(p) + 0.5;
    v += kind === 'half' ? `<path class="tick" d="M7 ${y}h6"/>` : `<path class="tick" d="M9 ${y}h2"/>`;
  }
});
side.innerHTML = v;
```
